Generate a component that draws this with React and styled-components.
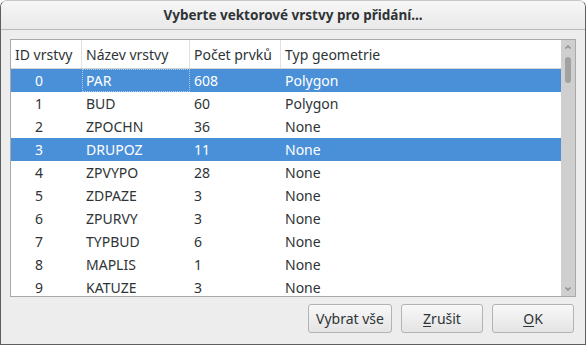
import React from "react";
import styled, { createGlobalStyle } from "styled-components";

const Global = createGlobalStyle`
  html, body { margin: 0; padding: 0; background: #ffffff; }
  body { font-family: "Noto Sans", "DejaVu Sans", sans-serif; }
`;

const Window = styled.div`
  box-sizing: border-box;
  width: 586px;
  height: 345px;
  background: #ededed;
  border: 1px solid #5e5e5e;
  border-top-color: #c8c8c8;
  border-radius: 7px 7px 0 0;
  display: flex;
  flex-direction: column;
  overflow: hidden;
  color: #2e3436;
  font-size: 14px;
`;

const TitleBar = styled.div`
  height: 28px;
  flex: none;
  display: flex;
  align-items: center;
  justify-content: center;
  background: linear-gradient(#f6f6f6, #e9e9e9);
  border-bottom: 1px solid #b9b9b9;
  font-weight: bold;
  font-size: 13.5px;
  color: #2e3436;
`;

const Body = styled.div`
  flex: 1;
  display: flex;
  flex-direction: column;
  padding: 9px 9px 0 9px;
`;

const Frame = styled.div`
  box-sizing: border-box;
  height: 258px;
  border: 1px solid #a9a9a9;
  background: #ffffff;
  display: flex;
  overflow: hidden;
`;

const TableArea = styled.div`
  flex: 1;
  display: flex;
  flex-direction: column;
  overflow: hidden;
`;

const cols = "71px 108px 91px 1fr";

const HeaderRow = styled.div`
  display: grid;
  grid-template-columns: ${cols};
  height: 28px;
  flex: none;
  border-bottom: 1px solid #d3d3d3;
`;

const HeaderCell = styled.div`
  display: flex;
  align-items: center;
  padding-left: 4px;
  border-right: ${(p) => (p.$last ? "none" : "1px solid #e1e1e1")};
  white-space: nowrap;
`;

const Row = styled.div`
  display: grid;
  grid-template-columns: ${cols};
  height: 23px;
  flex: none;
  background: ${(p) => (p.$selected ? "#4a90d9" : "#ffffff")};
  color: ${(p) => (p.$selected ? "#ffffff" : "#2e3436")};
`;

const Cell = styled.div`
  box-sizing: border-box;
  display: flex;
  align-items: center;
  padding-left: ${(p) => p.$pad || 4}px;
  white-space: nowrap;
  outline: ${(p) => (p.$focus ? "1px dotted rgba(255,255,255,0.55)" : "none")};
  outline-offset: -1px;
`;

const Scrollbar = styled.div`
  width: 14px;
  flex: none;
  background: #cfcfcf;
  display: flex;
  flex-direction: column;
  align-items: center;
`;

const Arrow = styled.div`
  height: 14px;
  display: flex;
  align-items: center;
  justify-content: center;
`;

const Thumb = styled.div`
  width: 6px;
  height: 26px;
  margin-top: 3px;
  border-radius: 3px;
  background: #a2a2a2;
`;

const Spacer = styled.div`
  flex: 1;
`;

const ButtonRow = styled.div`
  display: flex;
  justify-content: flex-end;
  gap: 9px;
  margin-top: 7px;
  padding-right: 2px;
`;

const Button = styled.button`
  box-sizing: border-box;
  height: 29px;
  width: ${(p) => p.$w}px;
  border: 1px solid #b3b3b3;
  border-radius: 3px;
  background: linear-gradient(#f8f8f8, #e4e4e4);
  font-family: "Noto Sans", "DejaVu Sans", sans-serif;
  font-size: 14px;
  color: #2e3436;
  padding: 0;
  & u { text-underline-offset: 2px; }
`;

const rows = [
  ["0", "PAR", "608", "Polygon"],
  ["1", "BUD", "60", "Polygon"],
  ["2", "ZPOCHN", "36", "None"],
  ["3", "DRUPOZ", "11", "None"],
  ["4", "ZPVYPO", "28", "None"],
  ["5", "ZDPAZE", "3", "None"],
  ["6", "ZPURVY", "3", "None"],
  ["7", "TYPBUD", "6", "None"],
  ["8", "MAPLIS", "1", "None"],
  ["9", "KATUZE", "3", "None"],
];

const selected = new Set([0, 3]);

function ArrowIcon({ up }) {
  return (
    <svg width="8" height="6" viewBox="0 0 8 6">
      <path
        d={up ? "M1.5 4.5 L4 2 L6.5 4.5" : "M1.5 1.5 L4 4 L6.5 1.5"}
        fill="none"
        stroke="#8a8a8a"
        strokeWidth="1.4"
      />
    </svg>
  );
}

export default function App() {
  return (
    <>
      <Global />
      <Window>
        <TitleBar>Vyberte vektorové vrstvy pro přidání...</TitleBar>
        <Body>
          <Frame>
            <TableArea>
              <HeaderRow>
                <HeaderCell>ID vrstvy</HeaderCell>
                <HeaderCell>Název vrstvy</HeaderCell>
                <HeaderCell>Počet prvků</HeaderCell>
                <HeaderCell $last>Typ geometrie</HeaderCell>
              </HeaderRow>
              {rows.map((r, i) => (
                <Row key={i} $selected={selected.has(i)}>
                  <Cell $pad={24}>{r[0]}</Cell>
                  <Cell $focus={i === 0}>{r[1]}</Cell>
                  <Cell>{r[2]}</Cell>
                  <Cell>{r[3]}</Cell>
                </Row>
              ))}
            </TableArea>
            <Scrollbar>
              <Arrow>
                <ArrowIcon up />
              </Arrow>
              <Thumb />
              <Spacer />
              <Arrow>
                <ArrowIcon />
              </Arrow>
            </Scrollbar>
          </Frame>
          <ButtonRow>
            <Button $w={84}>Vybrat vše</Button>
            <Button $w={82}>
              <u>Z</u>rušit
            </Button>
            <Button $w={82}>
              <u>O</u>K
            </Button>
          </ButtonRow>
        </Body>
      </Window>
    </>
  );
}
